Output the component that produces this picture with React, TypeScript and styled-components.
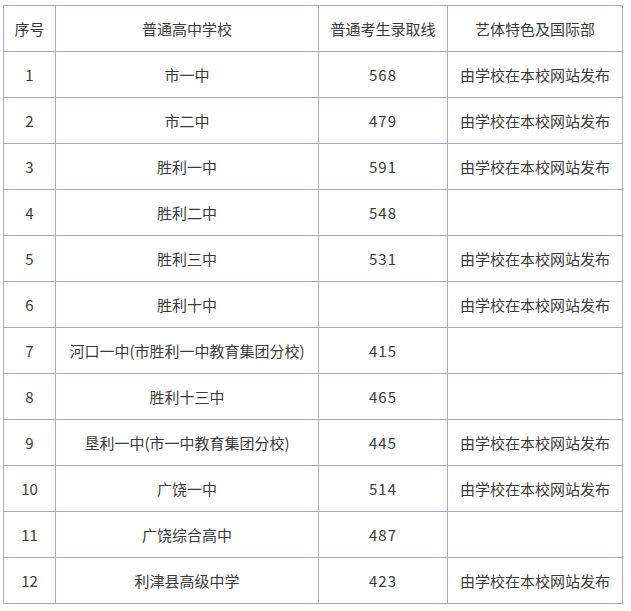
import React from "react";
import styled, { createGlobalStyle } from "styled-components";

const Global = createGlobalStyle`
  html, body { margin: 0; padding: 0; background: #ffffff; }
  body { font-family: "Noto Sans CJK SC", "Microsoft YaHei", "Noto Sans", sans-serif; }
`;

const Page = styled.div`
  padding: 5px 0 0 3px;
`;

const Table = styled.table`
  border-collapse: collapse;
  table-layout: fixed;
  width: 620px;
  color: #3a3a3a;
  font-size: 15px;
`;

const Col = styled.col<{ $w?: number }>`
  width: ${(p) => (p.$w ? `${p.$w}px` : "auto")};
`;

const Cell = styled.td<{ $num?: boolean }>`
  border: 1px solid #aca7c9;
  height: 45px;
  padding: 0;
  text-align: center;
  vertical-align: middle;
  white-space: nowrap;
  line-height: 20px;
  letter-spacing: ${(p) => (p.$num ? "1px" : "0")};
`;

type Row = [string, string, string, string];

const header: Row = ["序号", "普通高中学校", "普通考生录取线", "艺体特色及国际部"];
const P = "由学校在本校网站发布";
const rows: Row[] = [
  ["1", "市一中", "568", P],
  ["2", "市二中", "479", P],
  ["3", "胜利一中", "591", P],
  ["4", "胜利二中", "548", ""],
  ["5", "胜利三中", "531", P],
  ["6", "胜利十中", "", P],
  ["7", "河口一中(市胜利一中教育集团分校)", "415", ""],
  ["8", "胜利十三中", "465", ""],
  ["9", "垦利一中(市一中教育集团分校)", "445", P],
  ["10", "广饶一中", "514", P],
  ["11", "广饶综合高中", "487", ""],
  ["12", "利津县高级中学", "423", P],
];

export default function App() {
  return (
    <Page>
      <Global />
      <Table>
        <colgroup>
          <Col $w={52} />
          <Col $w={263} />
          <Col $w={129} />
          <Col />
        </colgroup>
        <tbody>
          {[header, ...rows].map((r, i) => (
            <tr key={i}>
              {r.map((c, j) => (
                <Cell key={j} $num={i > 0 && j === 2}>
                  {c}
                </Cell>
              ))}
            </tr>
          ))}
        </tbody>
      </Table>
    </Page>
  );
}
